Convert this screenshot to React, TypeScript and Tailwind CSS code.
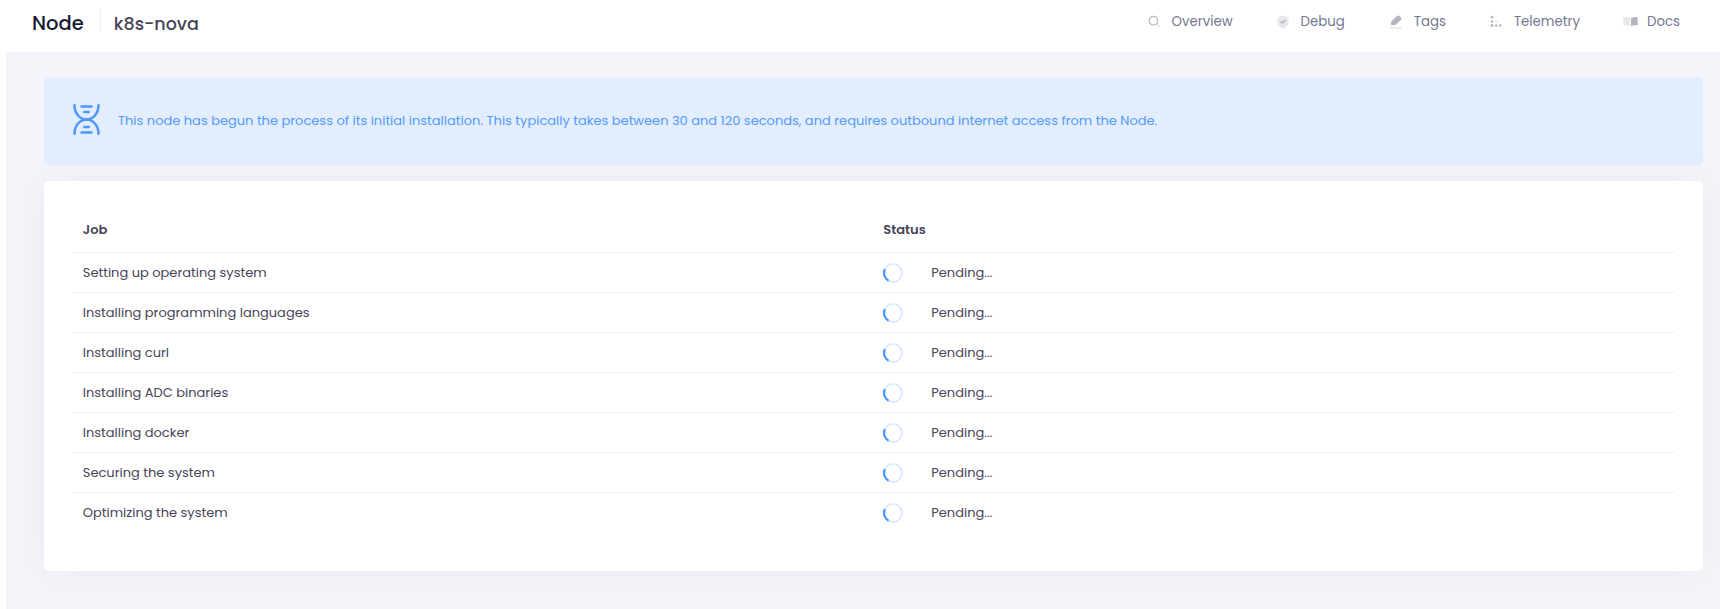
import React from 'react';

const SearchIcon = () => (
  <svg className="block h-[13px] w-[13px]" viewBox="0 0 13 13" fill="none">
    <path d="M8.8 8.8L11.5 11.5" stroke="#e3e3eb" strokeWidth="1.3" strokeLinecap="round" />
    <circle cx="5.4" cy="5.7" r="4.3" stroke="#b5b5c3" strokeWidth="1.2" />
  </svg>
);

const ShieldIcon = () => (
  <svg className="block h-[14px] w-[12px]" viewBox="0 0 12 14">
    <path d="M.5 2C2.5 1.8 4.5 1 6 .4C7.5 1 9.5 1.8 11.5 2V8C11.5 10.5 9 12.5 6 13.7C3 12.5.5 10.5.5 8Z" fill="#e6e6ec" />
    <path d="M3.9 6.7L5.4 8L8.1 5.3" fill="none" stroke="#b0b0bf" strokeWidth="1.3" strokeLinecap="round" strokeLinejoin="round" />
  </svg>
);

const PenIcon = () => (
  <svg className="block h-[14px] w-[12px]" viewBox="0 0 12 14">
    <path d="M.8 10.3L1.3 6.4L6.9 1C7.7.3 8.7.3 9.5 1L10.9 2.4C11.7 3.2 11.6 4.2 10.9 4.9L5.3 10.1Z" fill="#b5b5c3" />
    <rect x=".2" y="11.8" width="11.5" height="1.8" rx=".5" fill="#e9e9ee" />
  </svg>
);

const DotsIcon = () => (
  <svg className="block h-[13px] w-[13px]" viewBox="0 0 13 13" fill="#b5b5c3">
    <circle cx="2" cy="2.2" r="1.4" />
    <circle cx="2" cy="6.5" r="1.3" />
    <circle cx="2" cy="10.5" r="1.4" />
    <circle cx="6.2" cy="10.5" r="1.3" />
    <circle cx="10.3" cy="10.5" r="1.3" />
    <circle cx="6.2" cy="6.5" r="1.2" fill="#e6e6ec" />
  </svg>
);

const BookIcon = () => (
  <svg className="block h-[11px] w-[15px]" viewBox="0 0 15 11">
    <path d="M.3 1.5C.3 1.1.6.9 1 .9C3.3.9 5.3 1.3 7 2.2V10.2C5.2 9.4 3.2 9 .3 9Z" fill="#e6e6ec" />
    <path d="M8 2.2C9.7 1.3 11.7.9 14 .9C14.4.9 14.7 1.1 14.7 1.5V9C12 9 10 9.4 8 10.2Z" fill="#b5b5c3" />
  </svg>
);

const HourglassIcon = () => (
  <svg className="block h-[31px] w-[27px]" viewBox="0 0 27 31" fill="none" stroke="#4f97fd" strokeWidth="2.5" strokeLinecap="round">
    <path d="M1.5 1.3C1.5 9 6.5 15.5 13.5 15.5S25.5 9 25.5 1.3" />
    <path d="M1.5 29.7C1.5 22 6.5 15.5 13.5 15.5S25.5 22 25.5 29.7" />
    <path d="M8.5 2.6H18.5M11.3 7.9H15.7M11.3 23.1H15.7M8.5 28.4H18.5" />
  </svg>
);

const Spinner = () => (
  <svg className="block h-5 w-5" viewBox="0 0 20 20" fill="none" strokeWidth="2">
    <circle cx="10" cy="10" r="9" stroke="#d9e9ff" />
    <path d="M1.9 6.2A9 9 0 0 0 5.6 17.85" stroke="#4f97fd" strokeWidth="2.3" />
  </svg>
);

const nav = [
  { label: 'Overview', icon: <SearchIcon />, spacing: '' },
  { label: 'Debug', icon: <ShieldIcon />, spacing: 'mr-px' },
  { label: 'Tags', icon: <PenIcon />, spacing: '' },
  { label: 'Telemetry', icon: <DotsIcon />, spacing: '-mr-px' },
  { label: 'Docs', icon: <BookIcon />, spacing: '' },
];

const jobs = [
  'Setting up operating system',
  'Installing programming languages',
  'Installing curl',
  'Installing ADC binaries',
  'Installing docker',
  'Securing the system',
  'Optimizing the system',
];

export default function App() {
  return (
    <div className="flex h-[609px] w-full flex-col overflow-hidden bg-white font-['Poppins','Inter',sans-serif] text-[13px] text-[#464457]">
      <header className="flex h-[52px] shrink-0 justify-between pl-[32px] pr-[40px]">
        <div className="flex h-[46px] items-center">
          <h1 className="pt-[1px] text-[19.5px] font-medium leading-none text-[#181c32]">Node</h1>
          <div className="mb-[8px] ml-[16px] mr-[13px] h-[22px] w-px bg-[#ebedf3]" />
          <span className="pt-[3px] text-[17.55px] font-medium leading-none">k8s-nova</span>
        </div>
        <nav className="flex h-[43px] items-center gap-[44px] text-[13.3px] text-[#74788f]">
          {nav.map((n) => (
            <a key={n.label} className={`flex items-center ${n.spacing}`}>
              <span className="flex w-[24px]">{n.icon}</span>
              <span>{n.label}</span>
            </a>
          ))}
        </nav>
      </header>
      <main className="ml-[6px] flex-1 bg-[#f4f5fa] pl-[38px] pr-[17px] pt-[25px]">
        <div className="flex h-[88px] items-center rounded-[5px] bg-[#e2eefd] pl-[29px] text-[#5599fb]">
          <div className="mb-[4px]"><HourglassIcon /></div>
          <p className="ml-[18px]">
            This node has begun the process of its initial installation. This typically takes between 30 and 120 seconds, and requires outbound internet access from the Node.
          </p>
        </div>
        <section className="mt-4 h-[390px] rounded-[5px] bg-white px-[29px] pt-[26px] shadow-[0_0_40px_0_rgba(70,70,95,0.06)]">
          <div className="grid h-[45px] grid-cols-2 items-center pt-[1px] font-semibold">
            <div className="pl-[9.75px]">Job</div>
            <div className="pl-[9.75px]">Status</div>
          </div>
          {jobs.map((job) => (
            <div key={job} className="grid h-10 grid-cols-2 items-center border-t border-[#ebedf3]">
              <div className="pl-[9.75px]">{job}</div>
              <div className="flex items-center pl-[9px]">
                <Spinner />
                <span className="ml-[28.75px]">Pending...</span>
              </div>
            </div>
          ))}
        </section>
      </main>
    </div>
  );
}
